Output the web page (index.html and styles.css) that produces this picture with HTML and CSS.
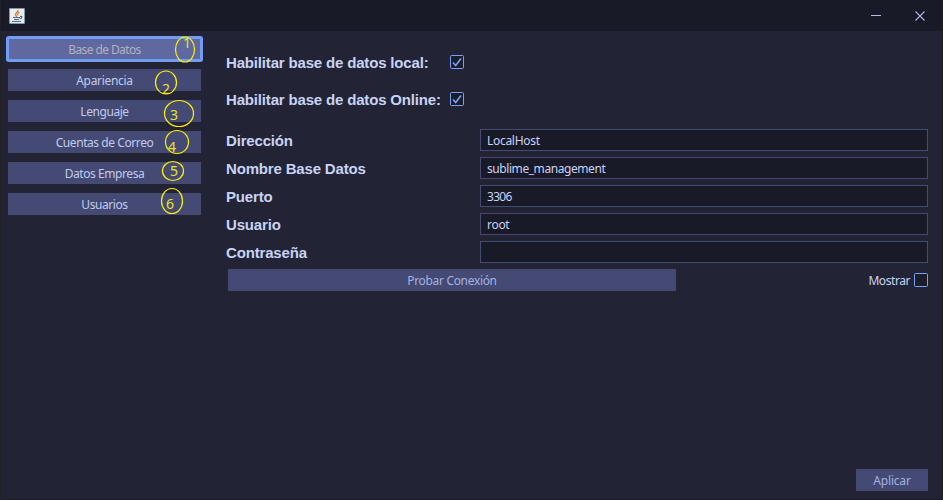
FILE: index.html
```html
<!DOCTYPE html>
<html lang="es">
<head>
<meta charset="utf-8">
<title>Base de Datos</title>
<link rel="stylesheet" href="styles.css">
</head>
<body>
<div class="window">
  <header class="titlebar">
    <svg class="java" width="16" height="16" viewBox="0 0 16 16">
      <rect width="16" height="16" rx="1" fill="#7f99ab"/>
      <rect x="1" y="1" width="14" height="14" fill="#e9eef1"/>
      <path d="M9 2C9.500 4 6 5 6.500 7L8 9M10.500 4C8 5.500 8.500 6 9 7.500" fill="none" stroke="#e57624" stroke-width="1.300"/>
      <path d="M4 9.500h7M5 11.500h5M11 8.500c3-.5 2 2-.5 2.500M3 13.500h9" fill="none" stroke="#416989" stroke-width="1.200"/>
    </svg>
    <svg class="controls" width="56" height="12" viewBox="0 0 56 12">
      <path d="M0 5.500h10" stroke="#b4bbed" fill="none"/>
      <path d="M44.500 1.500l9 9M53.500 1.500l-9 9" stroke="#aeb5e8" stroke-width="1.100" fill="none"/>
    </svg>
  </header>
  <div class="content">
    <nav class="sidebar">
      <button class="btn active"><span>Base de Datos</span></button>
      <button class="btn"><span class="wide">Apariencia</span></button>
      <button class="btn"><span>Lenguaje</span></button>
      <button class="btn"><span>Cuentas de Correo</span></button>
      <button class="btn"><span>Datos Empresa</span></button>
      <button class="btn"><span>Usuarios</span></button>
    </nav>
    <main class="panel">
      <div class="toggles">
        <label class="toggle"><span class="label">Habilitar base de datos local:</span>
          <svg class="box" viewBox="0 0 14 14"><rect x=".5" y=".5" width="13" height="13" rx="1"/><path d="M3 7.500l2.700 3L11 3.500"/></svg></label>
        <label class="toggle"><span class="label">Habilitar base de datos Online:</span>
          <svg class="box" viewBox="0 0 14 14"><rect x=".5" y=".5" width="13" height="13" rx="1"/><path d="M3 7.500l2.700 3L11 3.500"/></svg></label>
      </div>
      <div class="fields">
        <span class="label">Dirección</span><div class="field wide">LocalHost</div>
        <span class="label">Nombre Base Datos</span><div class="field">sublime_management</div>
        <span class="label">Puerto</span><div class="field number">3306</div>
        <span class="label">Usuario</span><div class="field wide">root</div>
        <span class="label">Contraseña</span><div class="field"></div>
      </div>
      <div class="actions">
        <button class="btn test"><span>Probar Conexión</span></button>
        <label class="show"><span>Mostrar</span><svg class="box" viewBox="0 0 14 14"><rect x=".5" y=".5" width="13" height="13" rx="1"/></svg></label>
      </div>
      <button class="btn apply"><span>Aplicar</span></button>
    </main>
  </div>
</div>
<svg class="marks" width="210" height="220" viewBox="0 0 210 220">
  <ellipse cx="185" cy="49.500" rx="9.500" ry="12.500"/><text x="183" y="48">1</text>
  <ellipse cx="166" cy="82.500" rx="10.500" ry="11.500"/><text x="162" y="94">2</text>
  <ellipse cx="179" cy="113.500" rx="14.500" ry="13"/><text x="170" y="120">3</text>
  <ellipse cx="177" cy="142" rx="11.500" ry="11.500"/><text x="168" y="152">4</text>
  <ellipse cx="173" cy="171" rx="10.500" ry="9.500"/><text x="170" y="176">5</text>
  <ellipse cx="172" cy="201" rx="10.500" ry="12.500"/><text x="166" y="209">6</text>
</svg>
</body>
</html>
```
FILE: styles.css
```css
* { box-sizing: border-box; }
body {
  margin: 0;
  width: 943px;
  height: 500px;
  overflow: hidden;
  background: #1c1c24;
  font: 12px/16px "Noto Sans", sans-serif;
  letter-spacing: -0.43px;
  color: #c8d3f5;
}
.window {
  display: flex;
  flex-direction: column;
  width: 942px;
  height: 499px;
  border-left: 1px solid #212124;
  background: #222334;
}
.titlebar {
  display: flex;
  justify-content: space-between;
  height: 31px;
  padding: 8px 14px 0 8px;
  background: #191a28;
}
.controls { margin: 2px 1px 0 0; }
.content { display: flex; flex: 1; padding: 7px 14px 8px 7px; }
.sidebar { display: flex; flex-direction: column; gap: 9px; width: 193px; }
.btn {
  display: flex;
  align-items: center;
  justify-content: center;
  flex: none;
  height: 22px;
  padding: 1px 0 0;
  border: 0;
  background: #444a73;
  color: #c0caf0;
  font: inherit;
  letter-spacing: inherit;
}
.btn span { padding-top: 1px; }
.active {
  background: #6068a0;
  color: #b0b3bf;
  box-shadow: 0 0 0 2px #739df2;
  border: 1px solid #739df2;
  border-radius: 1px;
  letter-spacing: -0.6px;
}
.panel { display: flex; flex-direction: column; flex: 1; margin-left: 25px; }
.toggles { display: flex; flex-direction: column; gap: 19px; padding-top: 16px; }
.toggle { display: flex; align-items: flex-start; justify-content: space-between; width: 238px; height: 18px; }
.toggle .box { margin-top: 1px; }
.label { font: bold 15px/18px "Liberation Sans", sans-serif; letter-spacing: -0.17px; white-space: nowrap; }
.box { display: block; width: 14px; height: 14px; fill: #1b1d2c; stroke: #78a2f8; flex: none; }
.box path { fill: none; stroke-width: 1.6; }
.fields {
  display: grid;
  grid-template-columns: 254px 448px;
  grid-auto-rows: 22px;
  row-gap: 6px;
  align-items: center;
  margin-top: 20px;
}
.fields .label { padding-top: 2px; }
.field {
  height: 22px;
  padding: 3px 6px;
  border: 1px solid #444a73;
  background: #191a28;
}
.wide { letter-spacing: -0.3px; }
.number { letter-spacing: -0.7px; }
.actions { display: flex; justify-content: space-between; margin: 6px 0 0 2px; }
.test { width: 448px; color: #a3b1e0; letter-spacing: -0.33px; }
.show { display: flex; align-items: center; gap: 4px; height: 22px; }
.show span { padding-top: 2px; }
.apply { align-self: flex-end; width: 72px; margin-top: auto; color: #a3b1e0; letter-spacing: -0.2px; }
.marks { position: absolute; left: 0; top: 0; pointer-events: none; }
.marks ellipse { fill: none; stroke: #fff200; stroke-width: 1.2; }
.marks text { fill: #e9e51c; font: 14px "Noto Sans", sans-serif; }
```
